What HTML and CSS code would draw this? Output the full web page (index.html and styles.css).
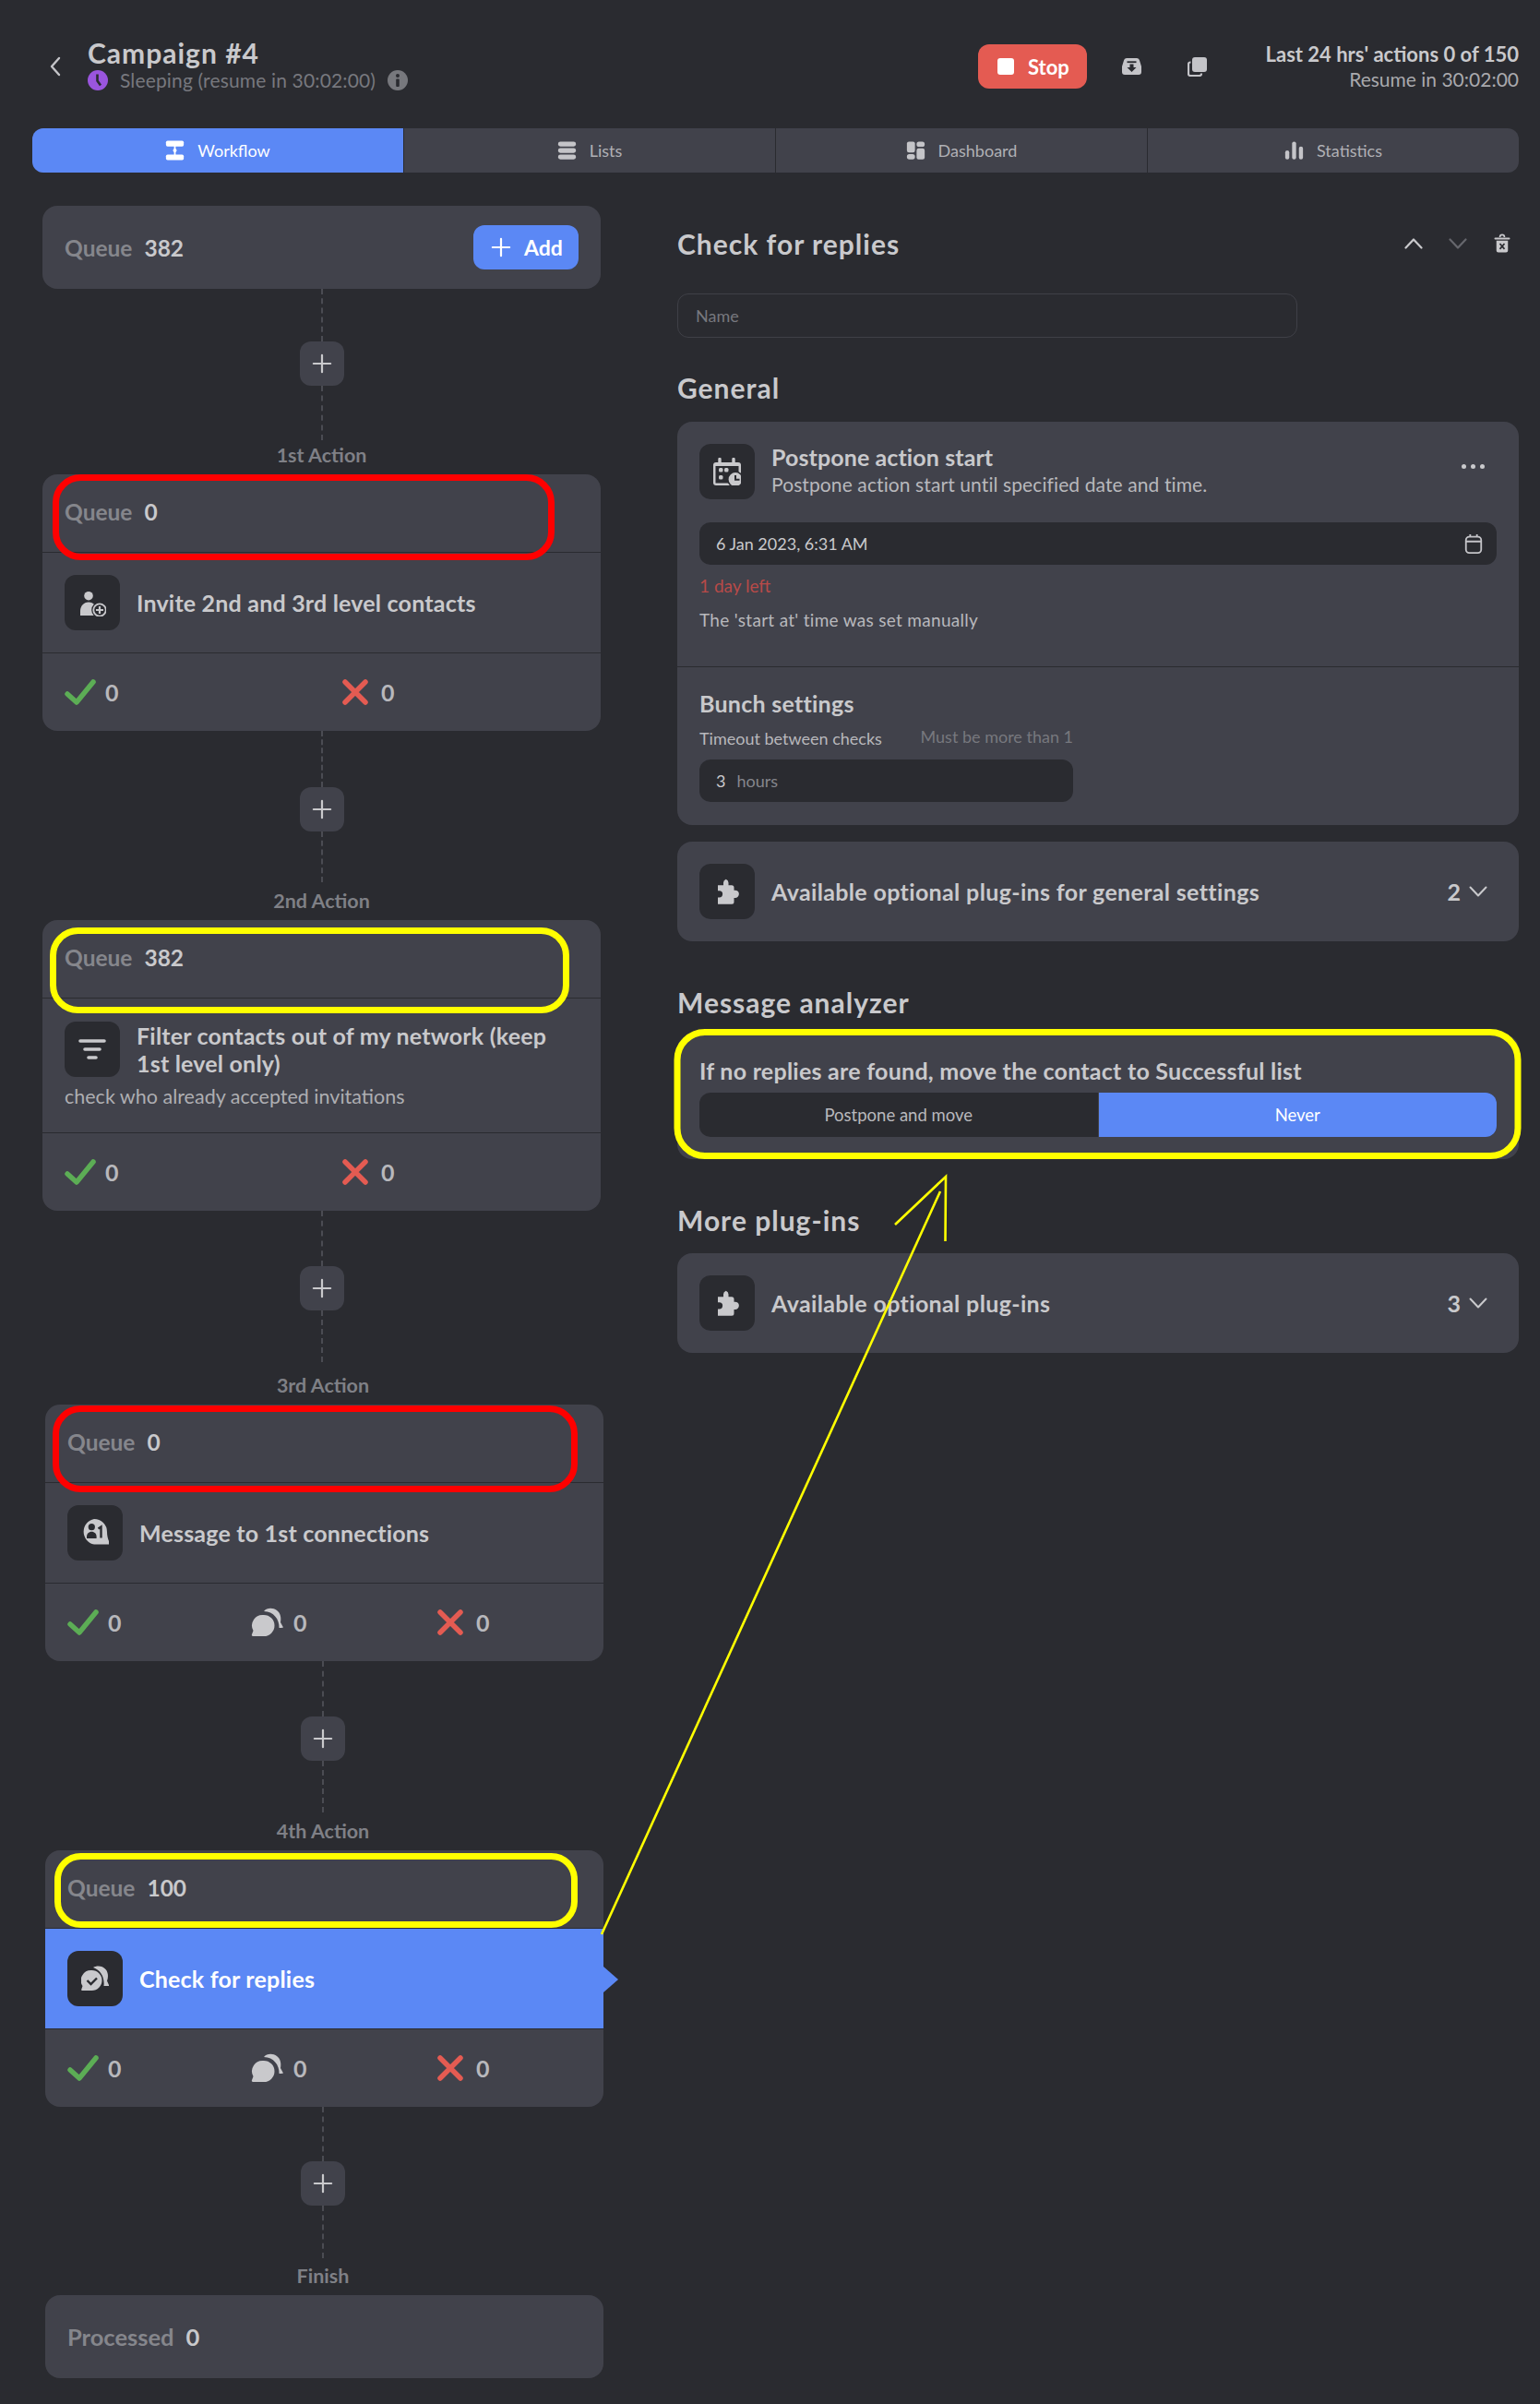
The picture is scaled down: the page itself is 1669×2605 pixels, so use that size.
FILE: index.html
```html
<!DOCTYPE html>
<html lang="en">
<head>
<meta charset="utf-8">
<title>Campaign #4</title>
<link rel="stylesheet" href="styles.css">
</head>
<body>
<svg class="defs" width="0" height="0" aria-hidden="true">
  <symbol id="i-plus" viewBox="0 0 24 24"><path d="M12 2v20M2 12h20" fill="none" stroke="currentColor" stroke-width="2.400" stroke-linecap="round"/></symbol>
  <symbol id="i-workflow" viewBox="0 0 24 24"><rect x="1" y="0" width="22" height="7" rx="2" fill="currentColor"/><rect x="1" y="17" width="22" height="7" rx="2" fill="currentColor"/><path d="M12 6v12" stroke="currentColor" stroke-width="2"/><path d="M12 8.500l2.600 3.500L12 15.500 9.400 12z" fill="currentColor"/></symbol>
  <symbol id="i-lists" viewBox="0 0 24 24"><rect x="1" y="1" width="22" height="6.200" rx="2.800" fill="currentColor"/><rect x="1" y="9" width="22" height="6.200" rx="2.800" fill="currentColor"/><rect x="1" y="17" width="22" height="6.200" rx="2.800" fill="currentColor"/></symbol>
  <symbol id="i-dash" viewBox="0 0 24 24"><rect x="1" y="1" width="10" height="13.500" rx="2.500" fill="currentColor"/><rect x="1" y="16.500" width="10" height="6.500" rx="3" fill="currentColor"/><rect x="13" y="1" width="10" height="6.500" rx="3" fill="currentColor"/><rect x="13" y="9.500" width="10" height="13.500" rx="2.500" fill="currentColor"/></symbol>
  <symbol id="i-stats" viewBox="0 0 24 24"><rect x="1" y="12" width="5" height="11" rx="2.500" fill="currentColor"/><rect x="9.500" y="1" width="5" height="22" rx="2.500" fill="currentColor"/><rect x="18" y="7" width="5" height="16" rx="2.500" fill="currentColor"/></symbol>
  <symbol id="i-archive" viewBox="0 0 21 18"><path d="M5 0h11a3 3 0 0 1 3 2.500L21 9v6a3 3 0 0 1-3 3H3a3 3 0 0 1-3-3V9l2-6.500A3 3 0 0 1 5 0z" fill="currentColor"/><path d="M5.500 4.200h10" stroke="#2a2b30" stroke-width="1.800"/><path d="M8.500 6.500h4v3.500h3L10.500 15 5.500 10h3z" fill="#2a2b30"/></symbol>
  <symbol id="i-copy" viewBox="0 0 21 21"><rect x="5" y="0" width="16" height="16" rx="3" fill="currentColor"/><path d="M3.500 5.500H3a2 2 0 0 0-2 2V18a2 2 0 0 0 2 2H13a2 2 0 0 0 2-2v-.500" fill="none" stroke="currentColor" stroke-width="2.200"/></symbol>
  <symbol id="i-trash" viewBox="0 0 24 24"><path d="M9 3.500a3 3 0 0 1 6 0" fill="none" stroke="currentColor" stroke-width="2"/><path d="M3 5.500h18" stroke="currentColor" stroke-width="2.400" stroke-linecap="round"/><path d="M4.500 8h15v13a2.500 2.500 0 0 1-2.500 2.500H7A2.500 2.500 0 0 1 4.500 21z" fill="currentColor"/><path d="M9 12l6 7M15 12l-6 7" stroke="#2a2b30" stroke-width="2"/></symbol>
  <symbol id="i-cal-clock" viewBox="0 0 30 30"><path d="M7 1.500v5M22 1.500v5" stroke="currentColor" stroke-width="3.400" stroke-linecap="round"/><path d="M0 8a3 3 0 0 1 3-3h24a3 3 0 0 1 3 3v19a3 3 0 0 1-3 3H3a3 3 0 0 1-3-3z" fill="currentColor"/><rect x="2.500" y="9" width="25" height="18.500" fill="#2a2b30"/><rect x="6" y="11" width="4.500" height="4.500" rx="1.500" fill="currentColor"/><rect x="12" y="11" width="4.500" height="4.500" rx="1.500" fill="currentColor"/><rect x="6" y="19" width="4.500" height="4.500" rx="1.500" fill="currentColor"/><circle cx="24" cy="23.500" r="9" fill="#2a2b30"/><circle cx="24" cy="23.500" r="7.400" fill="currentColor"/><path d="M24 19v4.800h4.500" fill="none" stroke="#2a2b30" stroke-width="2"/></symbol>
  <symbol id="i-cal" viewBox="0 0 24 24"><rect x="3" y="4" width="18" height="19" rx="4" fill="none" stroke="currentColor" stroke-width="2"/><path d="M3 9.500h18M8 1v3M16 1v3" stroke="currentColor" stroke-width="2"/></symbol>
  <symbol id="i-puzzle" viewBox="0 0 24 24"><path d="M4 23h12a2 2 0 0 0 2-2v-3.500h1a3.300 3.300 0 0 0 0-6.600h-1V8.500a2 2 0 0 0-2-2h-2.800V4.300a3.200 3.200 0 0 0-2.200-3 3.200 3.200 0 0 0-2.200 3v2.200H4v4.800h1.200a2.900 2.900 0 0 1 0 5.800H4z" fill="currentColor"/></symbol>
  <symbol id="i-person" viewBox="0 0 30 30"><circle cx="11" cy="7.700" r="4.800" fill="currentColor"/><path d="M2 29v-5c0-5 3.500-9.500 9-9.500s9 4.500 9 9.500v5z" fill="currentColor"/><circle cx="23" cy="23" r="8.800" fill="#2a2b30"/><circle cx="23" cy="23" r="6.700" fill="#2a2b30" stroke="currentColor" stroke-width="1.800"/><path d="M23 19v8M19 23h8" stroke="currentColor" stroke-width="2.200"/></symbol>
  <symbol id="i-filter" viewBox="0 0 30 30"><path d="M2 6h26M7 15h16M11 24h8" fill="none" stroke="currentColor" stroke-width="3.600" stroke-linecap="round"/></symbol>
  <symbol id="i-msg1" viewBox="0 0 30 30"><path d="M14 0a14 14 0 0 1 14 14c0 4 1 8 2.500 11 .5 1.500 0 2.500-1 2.500H14a14 14 0 0 1 0-27.500z" fill="currentColor"/><circle cx="11.300" cy="8.700" r="3.600" fill="#2a2b30"/><path d="M6 21v-2c0-3 2.200-5.300 5.300-5.300s5.300 2.300 5.300 5.300v2z" fill="#2a2b30"/><path d="M18.500 10.500l3-2V20.500" fill="none" stroke="#2a2b30" stroke-width="2.400"/></symbol>
  <symbol id="i-reply-check" viewBox="0 0 30 30"><path d="M13 3C17 .5 23 1 26.500 5c3 3.500 3 8.500 1.500 12.500l2.500 5.500h-6c1-9-3-17-11.500-20z" fill="currentColor"/><path d="M11.500 6a11 11 0 1 1 0 22H1c-1 0-1-1-.5-2L1.500 23A11 11 0 0 1 11.500 6z" fill="currentColor"/><path d="M6.500 17l4 4 6.500-6.500" fill="none" stroke="#2a2b30" stroke-width="2.400"/></symbol>
  <symbol id="i-replies" viewBox="0 0 36 32"><path d="M14 4C17 0 24 0 28 3c4 3 5 8 4 13l3 5.500c-1 .5-3 .5-4.500.5.500-9-6-18-16.500-18z" fill="currentColor"/><path d="M14 8a11.500 11.500 0 1 1 0 23H2c-1 0-1.500-1-1-2l1.500-4A11.500 11.500 0 0 1 14 8z" fill="currentColor"/></symbol>
  <symbol id="i-check" viewBox="0 0 34 30"><path d="M3 17l10 9L31 4" fill="none" stroke="#5cad55" stroke-width="5.500" stroke-linecap="round" stroke-linejoin="round"/></symbol>
  <symbol id="i-x" viewBox="0 0 30 30"><path d="M4 4l22 22M26 4L4 26" fill="none" stroke="#e45b52" stroke-width="5.500" stroke-linecap="round"/></symbol>
</svg>

<div class="page">
  <header class="top">
    <div class="top-left">
      <svg class="back" viewBox="0 0 14 22"><path d="M11 2L3 11l8 9" fill="none" stroke="currentColor" stroke-width="2.400" stroke-linecap="round" stroke-linejoin="round"/></svg>
      <div>
        <h1 class="title">Campaign #4</h1>
        <div class="status">
          <svg class="status-ic" viewBox="0 0 22 22"><circle cx="11" cy="11" r="11" fill="#9a55de"/><path d="M10.500 4.500v7l3.500 5" fill="none" stroke="#2a2b30" stroke-width="2.600"/></svg>
          <span>Sleeping (resume in 30:02:00)</span>
          <svg class="status-ic info" viewBox="0 0 22 22"><circle cx="11" cy="11" r="11" fill="#77787d"/><circle cx="11" cy="6" r="2" fill="#2a2b30"/><rect x="9.200" y="9.500" width="3.600" height="8.500" rx="1" fill="#2a2b30"/></svg>
        </div>
      </div>
    </div>
    <div class="top-right">
      <button class="btn btn-stop"><span class="stop-sq"></span>Stop</button>
      <svg class="tool tool-a"><use href="#i-archive"/></svg>
      <svg class="tool tool-b"><use href="#i-copy"/></svg>
      <div class="limits">
        <div class="limits-a">Last 24 hrs' actions 0 of 150</div>
        <div class="limits-b">Resume in 30:02:00</div>
      </div>
    </div>
  </header>

  <nav class="tabs">
    <div class="tab active"><svg class="tab-ic"><use href="#i-workflow"/></svg>Workflow</div>
    <div class="tab"><svg class="tab-ic"><use href="#i-lists"/></svg>Lists</div>
    <div class="tab"><svg class="tab-ic"><use href="#i-dash"/></svg>Dashboard</div>
    <div class="tab"><svg class="tab-ic"><use href="#i-stats"/></svg>Statistics</div>
  </nav>

  <main class="main">
    <section class="flow">
      <div class="card simple">
        <div class="q"><span class="q-l">Queue</span><span class="q-n">382</span></div>
        <button class="btn btn-add"><svg class="add-ic"><use href="#i-plus"/></svg>Add</button>
      </div>

      <div class="link l-1"><span class="dash"></span><span class="plus"><svg class="plus-ic"><use href="#i-plus"/></svg></span><span class="dash"></span></div>
      <div class="step-label lb-1">1st Action</div>
      <div class="card action">
        <div class="a-q"><span class="q-l">Queue</span><span class="q-n">0</span></div>
        <div class="a-body">
          <span class="box"><svg class="box-ic"><use href="#i-person"/></svg></span>
          <span class="a-title">Invite 2nd and 3rd level contacts</span>
        </div>
        <div class="stats two">
          <div class="stat"><svg class="s-check"><use href="#i-check"/></svg>0</div>
          <div class="stat"><svg class="s-x"><use href="#i-x"/></svg>0</div>
        </div>
      </div>

      <div class="link l-2"><span class="dash"></span><span class="plus"><svg class="plus-ic"><use href="#i-plus"/></svg></span><span class="dash"></span></div>
      <div class="step-label lb-2">2nd Action</div>
      <div class="card action">
        <div class="a-q"><span class="q-l">Queue</span><span class="q-n">382</span></div>
        <div class="a-body tall">
          <div class="tall-row">
            <span class="box"><svg class="box-ic"><use href="#i-filter"/></svg></span>
            <span class="a-title">Filter contacts out of my network (keep 1st level only)</span>
          </div>
          <div class="a-sub">check who already accepted invitations</div>
        </div>
        <div class="stats two">
          <div class="stat"><svg class="s-check"><use href="#i-check"/></svg>0</div>
          <div class="stat"><svg class="s-x"><use href="#i-x"/></svg>0</div>
        </div>
      </div>

      <div class="link l-3"><span class="dash"></span><span class="plus"><svg class="plus-ic"><use href="#i-plus"/></svg></span><span class="dash"></span></div>
      <div class="shifted">
        <div class="step-label lb-3">3rd Action</div>
        <div class="card action">
          <div class="a-q"><span class="q-l">Queue</span><span class="q-n">0</span></div>
          <div class="a-body">
            <span class="box"><svg class="box-ic"><use href="#i-msg1"/></svg></span>
            <span class="a-title">Message to 1st connections</span>
          </div>
          <div class="stats three">
            <div class="stat"><svg class="s-check"><use href="#i-check"/></svg>0</div>
            <div class="stat"><svg class="s-rep"><use href="#i-replies"/></svg>0</div>
            <div class="stat"><svg class="s-x"><use href="#i-x"/></svg>0</div>
          </div>
        </div>

        <div class="link l-4"><span class="dash"></span><span class="plus"><svg class="plus-ic"><use href="#i-plus"/></svg></span><span class="dash"></span></div>
        <div class="step-label lb-4">4th Action</div>
        <div class="card action">
          <div class="a-q"><span class="q-l">Queue</span><span class="q-n">100</span></div>
          <div class="a-body selected">
            <span class="box"><svg class="box-ic"><use href="#i-reply-check"/></svg></span>
            <span class="a-title">Check for replies</span>
          </div>
          <div class="stats three">
            <div class="stat"><svg class="s-check"><use href="#i-check"/></svg>0</div>
            <div class="stat"><svg class="s-rep"><use href="#i-replies"/></svg>0</div>
            <div class="stat"><svg class="s-x"><use href="#i-x"/></svg>0</div>
          </div>
        </div>

        <div class="link l-5"><span class="dash"></span><span class="plus"><svg class="plus-ic"><use href="#i-plus"/></svg></span><span class="dash"></span></div>
        <div class="step-label lb-5">Finish</div>
        <div class="card simple">
          <div class="q processed"><span class="q-l">Processed</span><span class="q-n">0</span></div>
        </div>
      </div>
    </section>

    <section class="detail">
      <div class="d-head">
        <h2 class="h">Check for replies</h2>
        <div class="d-tools">
          <svg class="chev up" viewBox="0 0 20 12"><path d="M1.500 10.500L10 1.500l8.500 9" fill="none" stroke="currentColor" stroke-width="2.200" stroke-linecap="round" stroke-linejoin="round"/></svg>
          <svg class="chev down" viewBox="0 0 20 12"><path d="M1.500 1.500L10 10.500l8.500-9" fill="none" stroke="currentColor" stroke-width="2.200" stroke-linecap="round" stroke-linejoin="round"/></svg>
          <svg class="trash"><use href="#i-trash"/></svg>
        </div>
      </div>
      <div class="name-input">Name</div>

      <h2 class="h h-general">General</h2>
      <div class="panel">
        <div class="sec sec-a">
          <div class="plug">
            <span class="box"><svg class="box-ic"><use href="#i-cal-clock"/></svg></span>
            <div class="plug-text">
              <div class="plug-title">Postpone action start</div>
              <div class="plug-desc">Postpone action start until specified date and time.</div>
            </div>
            <div class="dots"><i></i><i></i><i></i></div>
          </div>
          <div class="field date"><span>6 Jan 2023, 6:31 AM</span><svg class="cal"><use href="#i-cal"/></svg></div>
          <div class="left">1 day left</div>
          <div class="note">The 'start at' time was set manually</div>
        </div>
        <div class="sec sec-b">
          <div class="sub-h">Bunch settings</div>
          <div class="bunch">
            <div class="bunch-row"><span class="note">Timeout between checks</span><span class="hint">Must be more than 1</span></div>
            <div class="field num"><span class="val">3</span><span class="unit">hours</span></div>
          </div>
        </div>
      </div>

      <div class="panel row-panel gen-plugins">
        <span class="box"><svg class="box-ic puzzle"><use href="#i-puzzle"/></svg></span>
        <span class="row-title">Available optional plug-ins for general settings</span>
        <span class="count">2<svg class="count-chev" viewBox="0 0 20 12"><path d="M1.500 1.500L10 10.500l8.500-9" fill="none" stroke="currentColor" stroke-width="2" stroke-linecap="round" stroke-linejoin="round"/></svg></span>
      </div>

      <h2 class="h h-analyzer">Message analyzer</h2>
      <div class="panel analyzer">
        <div class="sub-h">If no replies are found, move the contact to Successful list</div>
        <div class="toggle"><div class="opt">Postpone and move</div><div class="opt on">Never</div></div>
      </div>

      <h2 class="h h-more">More plug-ins</h2>
      <div class="panel row-panel more-plugins">
        <span class="box"><svg class="box-ic puzzle"><use href="#i-puzzle"/></svg></span>
        <span class="row-title">Available optional plug-ins</span>
        <span class="count">3<svg class="count-chev" viewBox="0 0 20 12"><path d="M1.500 1.500L10 10.500l8.500-9" fill="none" stroke="currentColor" stroke-width="2" stroke-linecap="round" stroke-linejoin="round"/></svg></span>
      </div>
    </section>
  </main>

  <svg class="marks" viewBox="0 0 1669 2605" fill="none" aria-hidden="true">
    <rect x="60.500" y="517.500" width="537" height="86" rx="27" stroke="#ff0000" stroke-width="7"/>
    <rect x="57.500" y="1008.500" width="556" height="86" rx="27" stroke="#ffff00" stroke-width="7"/>
    <rect x="60.500" y="1526.500" width="562" height="87" rx="27" stroke="#ff0000" stroke-width="7"/>
    <rect x="62.500" y="2011.500" width="560" height="74" rx="25" stroke="#ffff00" stroke-width="7"/>
    <rect x="734" y="1118.500" width="911" height="134" rx="30" stroke="#ffff00" stroke-width="7"/>
    <path d="M652 2096L1019 1291" stroke="#ffff00" stroke-width="2.600"/>
    <path d="M970 1327L1025 1275L1024.500 1345" stroke="#ffff00" stroke-width="2.600"/>
  </svg>
</div>
</body>
</html>
```

FILE: styles.css
```css
* { box-sizing: border-box; }
html, body { margin: 0; padding: 0; }
body {
  background: #2a2b30;
  color: #c9c9cc;
  font-family: "Lato", "Liberation Sans", sans-serif;
}
.defs { position: absolute; }
.page { position: relative; width: 1669px; height: 2605px; padding: 48px 23px 0 35px; }
button { font-family: inherit; border: 0; }

/* header */
.top { display: flex; justify-content: space-between; height: 48px; }
.top-left { display: flex; align-items: center; padding-left: 18px; }
.back { width: 14px; height: 22px; margin-right: 28px; color: #c4c4c8; }
.title { margin: -5px 0 0; font-size: 30px; line-height: 32px; font-weight: 700; letter-spacing: 1px; color: #c9c9cc; }
.status { display: flex; align-items: center; gap: 13px; margin-top: 2px; font-size: 21px; line-height: 24px; letter-spacing: .15px; color: #77787e; }
.status-ic { width: 22px; height: 22px; flex: none; }
.top-right { display: flex; align-items: center; }
.btn { display: flex; align-items: center; height: 48px; border-radius: 12px; color: #fff; font-weight: 700; }
.btn-stop { width: 118px; background: #e45b52; font-size: 22px; padding: 0 0 0 21px; gap: 15px; }
.stop-sq { width: 18px; height: 18px; border-radius: 3px; background: #fff; }
.tool { color: #c4c4c8; flex: none; }
.tool-a { width: 21px; height: 18px; margin-left: 38px; }
.tool-b { width: 21px; height: 21px; margin-left: 50px; }
.limits { width: 338px; text-align: right; font-size: 22px; line-height: 27px; }
.limits-a { font-weight: 700; color: #c9c9cc; }
.limits-b { color: #a9a9ad; font-size: 21px; }

/* tabs */
.tabs { display: flex; margin-top: 43px; height: 48px; border-radius: 12px; overflow: hidden; background: #41424b; }
.tab { flex: 1; display: flex; align-items: center; justify-content: center; gap: 14px; font-size: 18px; color: #b0b0b5; border-left: 1px solid #2a2b30; }
.tab:first-child { border-left: 0; }
.tab.active { background: #5b88f5; color: #fff; }
.tab-ic { width: 21px; height: 22px; color: #c4c4c8; }
.active .tab-ic { color: #fff; }

/* layout */
.main { display: grid; grid-template-columns: 605px 912px; column-gap: 83px; margin: 36px 0 0 11px; }
.card { background: #41424b; border-radius: 16px; width: 605px; }
.simple { height: 90px; display: flex; align-items: center; justify-content: space-between; padding: 0 24px; }
.q { display: flex; align-items: baseline; gap: 13px; font-size: 24.500px; font-weight: 700; }
.q.processed { font-size: 25.500px; }
.q-l { color: #85868c; }
.q-n { color: #c9c9cc; }
.btn-add { width: 114px; background: #5b88f5; font-size: 23px; padding: 0 0 0 19px; gap: 14px; }
.add-ic { width: 22px; height: 22px; color: #fff; }

/* connector */
.link { display: flex; flex-direction: column; align-items: center; height: 164px; }
.dash { flex: 1; border-left: 2px dashed #4b4c53; }
.dash:first-child { flex: none; }
.l-1 .dash:first-child { height: 57px; }
.l-2 .dash:first-child { height: 61px; }
.l-3 .dash:first-child { height: 60px; }
.l-4 .dash:first-child { height: 60px; }
.l-5 .dash:first-child { height: 59px; }
.plus { display: flex; align-items: center; justify-content: center; width: 48px; height: 48px; border-radius: 12px; background: #41424b; color: #c9c9cc; flex: none; }
.plus-ic { width: 22px; height: 22px; }
.step-label { display: flex; align-items: flex-end; justify-content: center; padding-bottom: 8px; font-size: 21.500px; line-height: 26px; font-weight: 700; color: #7f8086; }
.lb-1 { height: 37px; }
.lb-2 { height: 41px; }
.lb-3 { height: 46px; }
.lb-4 { height: 41px; }
.lb-5 { height: 40px; }
.shifted { margin-left: 3px; }

/* action */
.a-q { height: 85px; padding: 25px 24px 0; display: flex; align-items: flex-start; gap: 13px; font-size: 24.500px; line-height: 32px; font-weight: 700; border-bottom: 1px solid #2a2b30; }
.a-body { height: 109px; display: flex; align-items: center; gap: 18px; padding: 0 24px; border-bottom: 1px solid #2a2b30; }
.box { width: 60px; height: 60px; border-radius: 12px; background: #2a2b30; color: #c9c9cc; display: flex; align-items: center; justify-content: center; flex: none; }
.box-ic { width: 30px; height: 30px; overflow: visible; }
.a-title { font-size: 25px; line-height: 30px; font-weight: 700; letter-spacing: .2px; color: #c9c9cc; }
.a-body.tall { height: 146px; display: block; padding: 25px 24px 0; }
.tall-row { display: flex; align-items: flex-start; gap: 18px; }
.tall-row .a-title { width: 480px; }
.a-sub { margin-top: 9px; font-size: 21.500px; line-height: 24px; color: #aeaeb2; }
.a-body.selected { position: relative; background: #5b88f5; }
.selected .a-title { color: #fff; }
.selected::after { content: ""; position: absolute; right: -16px; top: 41px; border-left: 16px solid #5b88f5; border-top: 14px solid transparent; border-bottom: 14px solid transparent; }
.stats { height: 84px; display: grid; align-items: center; padding-left: 24px; font-size: 25px; font-weight: 700; color: #b8b8bc; }
.two { grid-template-columns: 300px 300px; }
.three { grid-template-columns: 199px 201px 200px; }
.stat { display: flex; align-items: center; gap: 10px; }
.s-check { width: 34px; height: 30px; }
.s-x { width: 30px; height: 30px; margin-right: 3px; }
.s-rep { width: 36px; height: 32px; color: #c9c9cc; }

/* detail */
.h { margin: 0; font-size: 30px; line-height: 36px; font-weight: 700; letter-spacing: 1px; color: #c9c9cc; }
.d-head { display: flex; align-items: center; justify-content: space-between; margin-top: 23px; height: 36px; margin-bottom: 1px; }
.d-tools { display: flex; align-items: center; padding-right: 8px; }
.chev { width: 20px; height: 12px; }
.up { color: #c9c9cc; margin-right: 28px; }
.down { color: #66676d; margin-right: 28px; }
.trash { width: 20px; height: 22px; color: #c9c9cc; }
.name-input { display: flex; align-items: center; width: 672px; height: 48px; margin-top: 36px; padding-left: 19px; border: 1px solid #3f4047; border-radius: 12px; font-size: 18px; color: #77787e; }
.h-general { margin-top: 36px; }
.panel { background: #41424b; border-radius: 16px; margin-top: 17px; }
.h-general + .panel { margin-top: 19px; }
.sec-a { padding: 24px 24px 38px; border-bottom: 1px solid #2a2b30; }
.sec-b { padding: 24px 24px 25px; }
.plug { display: flex; align-items: flex-start; gap: 18px; }
.plug-title { font-size: 25px; line-height: 30px; font-weight: 700; letter-spacing: .1px; color: #c9c9cc; }
.plug-desc { font-size: 21px; line-height: 30px; letter-spacing: .1px; color: #b8b8bc; }
.plug-text { flex: 1; margin-top: -1px; }
.dots { display: flex; gap: 5px; margin: 22px 13px 0 0; }
.dots i { width: 5px; height: 5px; border-radius: 50%; background: #c9c9cc; }
.field { display: flex; align-items: center; background: #2a2b30; border-radius: 12px; height: 46px; padding: 0 18px; font-size: 18px; color: #c9c9cc; }
.date { margin-top: 25px; justify-content: space-between; padding-right: 14px; }
.cal { width: 22px; height: 22px; color: #c4c4c8; }
.left { margin-top: 11px; font-size: 19px; line-height: 24px; color: #b84a48; }
.note { display: block; font-size: 18px; line-height: 24px; color: #b8b8bc; }
.sec-a .note { margin-top: 13px; font-size: 19px; letter-spacing: .3px; }
.sub-h { font-size: 25px; line-height: 30px; font-weight: 700; letter-spacing: .25px; color: #c9c9cc; }
.bunch { width: 405px; margin-top: 11px; }
.bunch-row { display: flex; justify-content: space-between; align-items: flex-start; }
.hint { font-size: 18px; line-height: 20px; color: #77787e; }
.num { margin-top: 11px; gap: 12px; }
.unit { color: #85868c; }
.row-panel { display: flex; align-items: center; height: 108px; padding: 0 24px; gap: 18px; }
.gen-plugins { margin-top: 18px; }
.row-title { flex: 1; font-size: 25px; font-weight: 700; letter-spacing: .35px; color: #c9c9cc; }
.count { display: flex; align-items: center; gap: 9px; font-size: 25px; font-weight: 700; padding-right: 10px; }
.count-chev { width: 20px; height: 12px; }
.h-analyzer { margin-top: 48px; }
.analyzer { height: 135px; padding: 24px 24px 0; }
.toggle { display: flex; height: 48px; margin-top: 9px; border-radius: 12px; overflow: hidden; background: #2a2b30; }
.opt { flex: 1; display: flex; align-items: center; justify-content: center; font-size: 18.500px; color: #b8b8bc; }
.opt.on { background: #5b88f5; color: #fff; border-left: 1px solid #41424b; }
.h-more { margin-top: 48px; }
.more-plugins { margin-top: 18px; }

/* annotations drawn over the screenshot */
.marks { position: absolute; left: 0; top: 0; width: 1669px; height: 2605px; pointer-events: none; }
```
